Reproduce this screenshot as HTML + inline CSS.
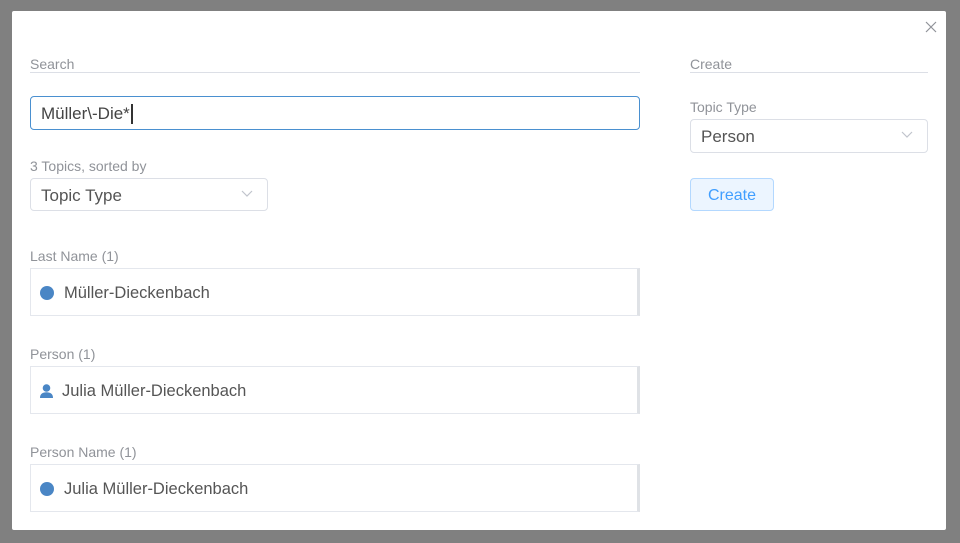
<!DOCTYPE html>
<html><head><meta charset="utf-8"><style>
*{box-sizing:border-box;margin:0;padding:0}
body{width:960px;height:543px;background:#808080;font-family:"Liberation Sans",sans-serif;position:relative;overflow:hidden}
.dlg{position:absolute;left:12px;top:11px;width:934px;height:519px;background:#fff;border-radius:2px}
.a{position:absolute}
.lbl{font-size:14px;color:#909399}
.hr{height:1px;background:#dcdfe6}
.box{border:1px solid #dcdfe6;border-radius:4px;font-size:17px;color:#555;padding-left:10px;padding-top:2px;display:flex;align-items:center}
.res{position:absolute;left:30px;width:610px;height:48px;border:1px solid #e4e7ed;border-right:3px solid #dfe2e6;display:flex;align-items:center;font-size:16.5px;color:#555;padding-left:9px;padding-top:2px}
.dot{width:14px;height:14px;border-radius:50%;background:#4a86c5;margin-right:10px}
.chev{position:absolute;right:14px;top:11px}
</style></head><body>
<div class="dlg"></div>
<svg class="a" style="left:925px;top:21px" width="12" height="12" viewBox="0 0 12 12"><path d="M1 1L11 11M11 1L1 11" stroke="#909399" stroke-width="1.2"/></svg>

<div class="a lbl" style="left:30px;top:56px">Search</div>
<div class="a hr" style="left:30px;top:72px;width:610px"></div>
<div class="a box" style="left:30px;top:96px;width:610px;height:34px;border-color:#4a90d0;color:#444">Müller\-Die*<span style="display:inline-block;width:2px;height:20px;background:#333;margin-left:1px"></span></div>

<div class="a lbl" style="left:30px;top:158px">3 Topics, sorted by</div>
<div class="a box" style="left:30px;top:178px;width:238px;height:33px">Topic Type<svg class="chev" width="12" height="8" viewBox="0 0 12 8"><path d="M1 1L6 6L11 1" fill="none" stroke="#c0c4cc" stroke-width="1.2"/></svg></div>

<div class="a lbl" style="left:30px;top:248px">Last Name (1)</div>
<div class="res" style="top:268px"><span class="dot"></span>Müller-Dieckenbach</div>
<div class="a lbl" style="left:30px;top:346px">Person (1)</div>
<div class="res" style="top:366px"><svg width="13" height="14" viewBox="0 0 13 14" style="margin-right:9px;margin-left:0px"><circle cx="6.5" cy="4" r="3.8" fill="#4a86c5"/><path d="M0 14C0 10 2.5 8.3 6.5 8.3S13 10 13 14Z" fill="#4a86c5"/></svg>Julia Müller-Dieckenbach</div>
<div class="a lbl" style="left:30px;top:444px">Person Name (1)</div>
<div class="res" style="top:464px"><span class="dot"></span>Julia Müller-Dieckenbach</div>

<div class="a lbl" style="left:690px;top:56px">Create</div>
<div class="a hr" style="left:690px;top:72px;width:238px"></div>
<div class="a lbl" style="left:690px;top:99px">Topic Type</div>
<div class="a box" style="left:690px;top:119px;width:238px;height:34px">Person<svg class="chev" width="12" height="8" viewBox="0 0 12 8"><path d="M1 1L6 6L11 1" fill="none" stroke="#c0c4cc" stroke-width="1.2"/></svg></div>
<div class="a" style="left:690px;top:178px;width:84px;height:33px;background:#ecf5ff;border:1px solid #b3d8ff;border-radius:4px;color:#409eff;font-size:16px;font-weight:normal;display:flex;align-items:center;justify-content:center;padding-top:2px">Create</div>
</body></html>
